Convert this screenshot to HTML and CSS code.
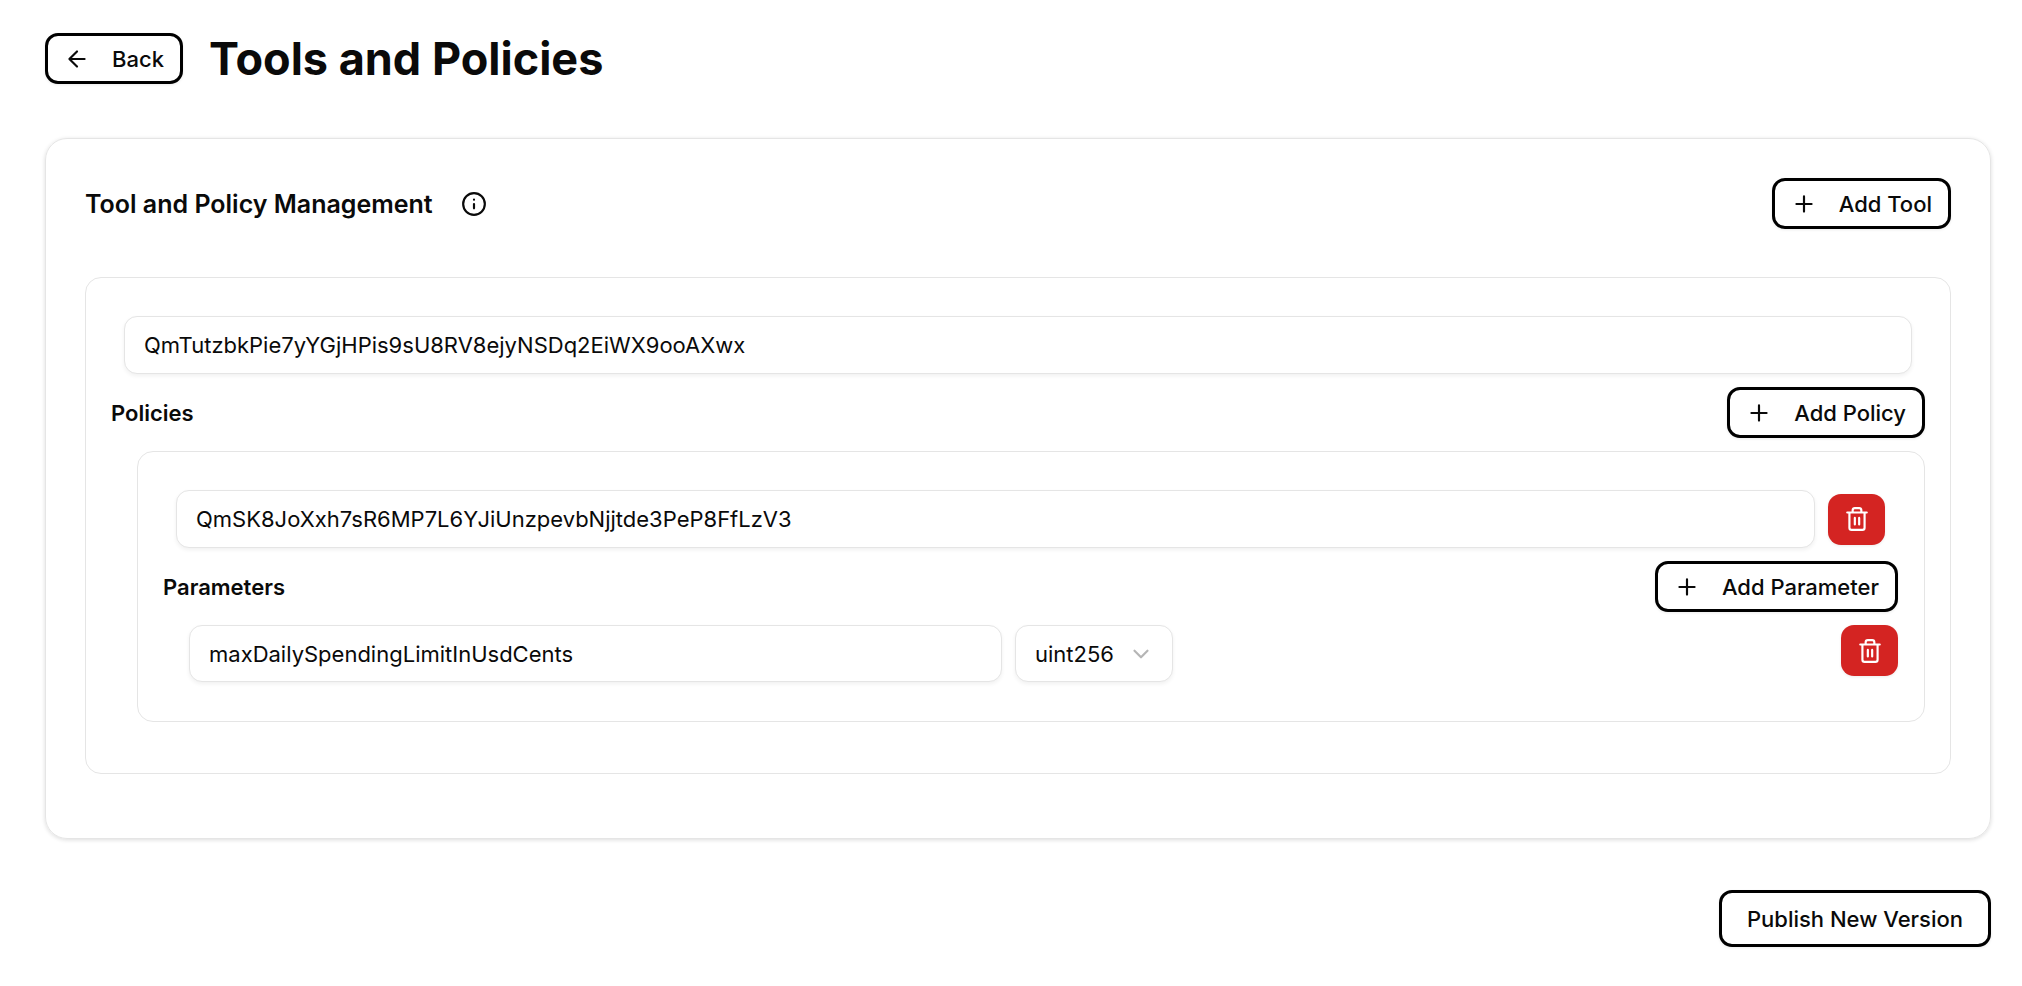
FILE: index.html
```
<!DOCTYPE html>
<html lang="en">
<head>
<meta charset="utf-8">
<title>Tools and Policies</title>
<link rel="stylesheet" href="styles.css">
</head>
<body>
<svg class="sprite" aria-hidden="true">
  <symbol id="plus" viewBox="0 0 24 24"><path d="M5 12h14M12 5v14"/></symbol>
  <symbol id="trash" viewBox="0 0 24 24"><path d="M3 6h18M19 6v14a2 2 0 0 1-2 2H7a2 2 0 0 1-2-2V6M8 6V4a2 2 0 0 1 2-2h4a2 2 0 0 1 2 2v2M10 11v6M14 11v6"/></symbol>
</svg>
<main class="page">
  <header class="page-header">
    <button class="btn" type="button"><svg class="icon" viewBox="0 0 24 24"><path d="m12 19-7-7 7-7M19 12H5"/></svg>Back</button>
    <h1 class="page-title">Tools and Policies</h1>
  </header>

  <section class="card">
    <div class="bar">
      <div class="card-heading">
        <h2 class="card-title">Tool and Policy Management</h2>
        <svg class="icon" viewBox="0 0 24 24"><circle cx="12" cy="12" r="10"/><path d="M12 16v-4M12 8h.01"/></svg>
      </div>
      <button class="btn" type="button"><svg class="icon"><use href="#plus"/></svg>Add Tool</button>
    </div>

    <div class="panel tool">
      <div class="row inset">
        <input class="field" type="text" aria-label="Tool IPFS CID" value="QmTutzbkPie7yYGjHPis9sU8RV8ejyNSDq2EiWX9ooAXwx">
      </div>
      <div class="bar">
        <h3 class="label">Policies</h3>
        <button class="btn" type="button"><svg class="icon"><use href="#plus"/></svg>Add Policy</button>
      </div>

      <div class="panel policy">
        <div class="row inset">
          <input class="field" type="text" aria-label="Policy IPFS CID" value="QmSK8JoXxh7sR6MP7L6YJiUnzpevbNjjtde3PeP8FfLzV3">
          <button class="btn-delete" type="button" aria-label="Remove policy"><svg class="icon"><use href="#trash"/></svg></button>
        </div>
        <div class="bar">
          <h4 class="label">Parameters</h4>
          <button class="btn" type="button"><svg class="icon"><use href="#plus"/></svg>Add Parameter</button>
        </div>
        <div class="parameter">
          <input class="field" type="text" aria-label="Parameter name" value="maxDailySpendingLimitInUsdCents">
          <div class="select-wrap">
            <select class="field select" aria-label="Parameter type">
              <option>uint256</option>
            </select>
            <svg class="chevron" viewBox="0 0 24 24"><path d="m6 9 6 6 6-6"/></svg>
          </div>
          <button class="btn-delete" type="button" aria-label="Remove parameter"><svg class="icon"><use href="#trash"/></svg></button>
        </div>
      </div>
    </div>
  </section>

  <footer class="page-footer">
    <button class="btn btn-large" type="button">Publish New Version</button>
  </footer>
</main>
</body>
</html>
```

FILE: styles.css
```
* {
  box-sizing: border-box;
}

body {
  margin: 0;
  background: #fff;
  color: #0a0a0a;
  font-family: Inter, "Liberation Sans", sans-serif;
  font-size: 22px;
  line-height: 32px;
}

h1, h2, h3, h4 {
  margin: 0;
}

.sprite {
  position: absolute;
  width: 0;
  height: 0;
}

.page {
  padding: 33px 31px 39px 45px;
}

.page-header {
  display: flex;
  align-items: center;
  gap: 26px;
  margin-bottom: 54px;
}

.page-title {
  font-size: 45px;
  font-weight: 700;
  line-height: 51px;
}

.icon {
  width: 26px;
  height: 26px;
  flex: none;
  fill: none;
  stroke: currentColor;
  stroke-width: 2;
  stroke-linecap: round;
  stroke-linejoin: round;
}

.btn {
  display: inline-flex;
  align-items: center;
  gap: 22px;
  height: 51px;
  padding: 0 16px;
  border: 3px solid #000;
  border-radius: 13px;
  background: #fff;
  color: inherit;
  font: inherit;
  font-weight: 500;
  white-space: nowrap;
  box-shadow: 0 1px 3px rgba(0, 0, 0, 0.08);
}

.btn-large {
  height: 57px;
  padding: 0 25px;
}

.btn-delete {
  display: flex;
  align-items: center;
  justify-content: center;
  width: 57px;
  height: 51px;
  flex: none;
  padding: 0;
  border: 0;
  border-radius: 13px;
  background: #d42422;
  color: #fff;
  box-shadow: 0 1px 3px rgba(0, 0, 0, 0.08);
}

.card {
  padding: 39px 39px 64px;
  border: 1px solid #e5e5e5;
  border-radius: 22px;
  box-shadow: 0 1px 4px rgba(0, 0, 0, 0.14);
}

.bar {
  display: flex;
  align-items: center;
  justify-content: space-between;
}

.card-heading {
  display: flex;
  align-items: center;
  gap: 28px;
}

.card-title {
  font-size: 25px;
  font-weight: 600;
}

.label {
  font-size: 22px;
  font-weight: 600;
}

.panel {
  display: flex;
  flex-direction: column;
  gap: 13px;
  border: 1px solid #e5e5e5;
  border-radius: 16px;
}

.tool {
  margin-top: 48px;
  padding: 38px 25px 51px;
}

.policy {
  margin-left: 26px;
  padding: 38px 26px 39px 25px;
}

.row {
  display: flex;
  align-items: center;
  gap: 13px;
}

.inset {
  padding: 0 13px;
}

.field {
  width: 100%;
  min-width: 0;
  height: 58px;
  padding: 0 19px;
  border: 1px solid #e5e5e5;
  border-radius: 13px;
  background: #fff;
  color: inherit;
  font: inherit;
  box-shadow: 0 2px 4px rgba(0, 0, 0, 0.06);
}

.parameter {
  display: grid;
  grid-template-columns: minmax(0, 1fr) minmax(0, 1fr) auto;
  gap: 13px;
  margin-left: 26px;
}

.parameter .field {
  height: 57px;
}

.select-wrap {
  position: relative;
  justify-self: start;
}

.select {
  width: 158px;
  appearance: none;
}

.chevron {
  position: absolute;
  top: 16px;
  right: 19px;
  width: 26px;
  height: 26px;
  fill: none;
  stroke: #b5b5b5;
  stroke-width: 2;
  stroke-linecap: round;
  stroke-linejoin: round;
  pointer-events: none;
}

.page-footer {
  display: flex;
  justify-content: flex-end;
  margin-top: 51px;
}
```
